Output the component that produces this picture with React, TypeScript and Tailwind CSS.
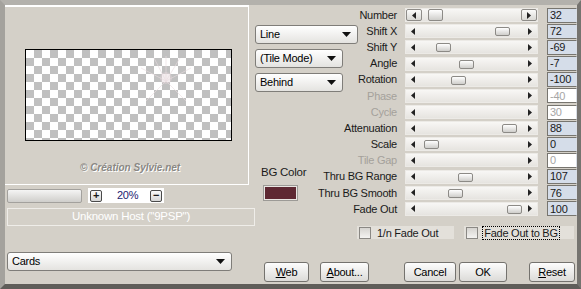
import React from "react";

type Row = { label: string; value: string; thumb: number | null; off?: boolean };

const rows: Row[] = [
  { label: "Number", value: "32", thumb: 22 },
  { label: "Shift X", value: "72", thumb: 89 },
  { label: "Shift Y", value: "-69", thumb: 30 },
  { label: "Angle", value: "-7", thumb: 53 },
  { label: "Rotation", value: "-100", thumb: 45 },
  { label: "Phase", value: "-40", thumb: null, off: true },
  { label: "Cycle", value: "30", thumb: null, off: true },
  { label: "Attenuation", value: "88", thumb: 96 },
  { label: "Scale", value: "0", thumb: 18 },
  { label: "Tile Gap", value: "0", thumb: null, off: true },
  { label: "Thru BG Range", value: "107", thumb: 52 },
  { label: "Thru BG Smooth", value: "76", thumb: 42 },
  { label: "Fade Out", value: "100", thumb: 101 },
];

const Arrow = ({ dir }: { dir: "l" | "r" }) => (
  <svg width="4" height="7" viewBox="0 0 4 7" className="shrink-0">
    {dir === "l" ? <path d="M4 0 L0 3.5 L4 7 Z" fill="#222" /> : <path d="M0 0 L4 3.5 L0 7 Z" fill="#222" />}
  </svg>
);

const Caret = () => (
  <svg width="9" height="5" viewBox="0 0 9 5" className="shrink-0">
    <path d="M0 0 H9 L4.5 5 Z" fill="#111" />
  </svg>
);

const Slider = ({ row, first }: { row: Row; first: boolean }) => (
  <div className="relative w-[133px] h-[14px] flex items-center justify-between px-[5px] bg-gradient-to-b from-[#f8f7f5] to-[#e6e4e0] border border-[#eceae6]">
    {first ? (
      <>
        <div className="absolute left-0 top-0 w-[16px] h-[12px] flex items-center justify-center rounded-[2px] border border-[#8e8c88] bg-gradient-to-b from-[#fbfbfa] to-[#d9d8d4]">
          <Arrow dir="l" />
        </div>
        <div className="absolute right-0 top-0 w-[16px] h-[12px] flex items-center justify-center rounded-[2px] border border-[#8e8c88] bg-gradient-to-b from-[#fbfbfa] to-[#d9d8d4]">
          <Arrow dir="r" />
        </div>
      </>
    ) : (
      <>
        <Arrow dir="l" />
        <Arrow dir="r" />
      </>
    )}
    {row.thumb !== null && (
      <div
        className={`absolute rounded-[2px] border border-[#8c8a86] bg-gradient-to-b from-[#ffffff] to-[#cfcecb] ${first ? "top-[0px] w-[15px] h-[12px]" : "top-[2px] w-[15px] h-[9px]"}`}
        style={{ left: row.thumb }}
      />
    )}
  </div>
);

const Select = ({ text, w }: { text: string; w: string }) => (
  <div className={`${w} h-[19px] flex items-center justify-between pl-[4px] pr-[6px] rounded-[3px] border border-[#7f7d79] bg-gradient-to-b from-[#ffffff] to-[#e4e3e0] text-[11px] text-black`}>
    <span>{text}</span>
    <Caret />
  </div>
);

const Button = ({ children, w }: { children: React.ReactNode; w: string }) => (
  <div className={`${w} h-[20px] flex items-center justify-center rounded-[3px] border border-[#74726e] bg-gradient-to-b from-[#fdfdfd] to-[#dcdbd8] text-[11px] text-black`}>
    {children}
  </div>
);

const Check = ({ label, focus }: { label: string; focus?: boolean }) => (
  <div className="h-[13px] flex items-center bg-[#e3e0da] pl-[2px] pr-[14px]">
    <div className="w-[12px] h-[12px] border border-[#8a8884] bg-gradient-to-b from-[#d6d4d0] to-[#f4f3f1]" />
    <span className={`ml-[4px] px-[1px] leading-[12px] ${focus ? "border border-dotted border-black" : "border border-transparent"}`}>{label}</span>
  </div>
);

export default function App() {
  return (
    <div className="w-[581px] h-[289px] overflow-hidden bg-[#d4d0c8] border-l-[5px] border-l-[#a4a29d] border-t-[5px] border-t-[#b3b1ac] border-r-[4px] border-r-[#75736f] border-b-[5px] border-b-[#5f5d59] font-['Liberation_Sans',Arial,sans-serif] text-[11px] tracking-[-0.25px] text-[#1a1a1a] flex">
      {/* left column */}
      <div className="w-[250px] shrink-0 flex flex-col">
        <div className="w-[244px] h-[180px] border-t-2 border-r border-b border-white flex flex-col">
          <div className="relative mt-[42px] ml-[20px] w-[207px] h-[92px] border border-black bg-white bg-[conic-gradient(#c0c0c0_25%,#ffffff_0_50%,#c0c0c0_0_75%,#ffffff_0)] bg-[length:16px_16px]">
            <svg className="absolute left-[110px] top-[6px]" width="60" height="50" viewBox="0 0 60 50">
              <g stroke="#eadde1" strokeWidth="1" opacity="0.6">
                <path d="M30 25 L30 0 M30 25 L55 12 M30 25 L50 45 M30 25 L10 45 M30 25 L5 12 M30 25 L18 2 M30 25 L44 2" />
              </g>
              <circle cx="30" cy="22" r="6" fill="#e6d8dc" opacity="0.45" />
            </svg>
          </div>
          <div className="mt-[19px] ml-[75px] text-[10px] font-bold italic text-[#8a8884] [text-shadow:1px_1px_0_#ffffff] tracking-normal">
            © Création Sylvie.net
          </div>
        </div>
        <div className="mt-[3px] h-[15px] flex items-center">
          <div className="ml-[2px] w-[75px] h-[14px] rounded-[2px] border border-[#a3a19d] bg-gradient-to-b from-[#f5f5f4] to-[#cfcecb]" />
          <div className="ml-[6px] w-[76px] h-[15px] bg-white flex items-center px-[2px]">
            <div className="w-[12px] h-[12px] rounded-[2px] border border-[#4a4a4a] bg-gradient-to-b from-[#fafafa] to-[#d6d6d6] flex items-center justify-center text-[11px] font-bold leading-none">+</div>
            <span className="ml-[15px] text-[11px] text-[#1c1c70]">20%</span>
            <div className="ml-auto w-[12px] h-[12px] rounded-[2px] border border-[#4a4a4a] bg-gradient-to-b from-[#fafafa] to-[#d6d6d6] flex items-center justify-center text-[11px] font-bold leading-none">−</div>
          </div>
        </div>
        <div className="mt-[5px] ml-[2px] w-[248px] h-[18px] shrink-0 border border-[#efede9] flex items-center justify-center text-[11.5px] text-white">
          Unknown Host ("9PSP")
        </div>
        <div className="mt-[26px] ml-[2px]">
          <Select text="Cards" w="w-[225px]" />
        </div>
      </div>

      {/* right side */}
      <div className="flex-1 flex flex-col">
        <div className="flex pt-[2px]">
          <div className="w-[55px] shrink-0 flex flex-col">
            <div className="mt-[18px]"><Select text="Line" w="w-[103px]" /></div>
            <div className="mt-[5px]"><Select text="(Tile Mode)" w="w-[88px]" /></div>
            <div className="mt-[5px]"><Select text="Behind" w="w-[88px]" /></div>
            <div className="mt-[72px] ml-[6px] whitespace-nowrap text-[11.5px]">BG Color</div>
            <div className="mt-[4px] ml-[8px] w-[35px] h-[16px] border border-[#9c9a96] p-[1px] bg-[#e8e6e2]">
              <div className="w-full h-full bg-[#5e2832]" />
            </div>
          </div>
          <div className="flex flex-col">
            {rows.map((r, i) => (
              <div key={r.label} className="h-[16.17px] flex items-center">
                <div className={`w-[87px] text-right whitespace-nowrap ${r.off ? "text-[#a4a19b]" : ""}`}>{r.label}</div>
                <div className="ml-[8px]"><Slider row={r} first={i === 0} /></div>
                <div
                  className={`ml-[9px] w-[30px] h-[15px] flex items-center pl-[2px] border border-[#77756f] border-r-[#d8dde5] ${
                    r.off ? "bg-white text-[#a6a6a6]" : "bg-[#d5dde9]"
                  }`}
                >
                  {r.value}
                </div>
              </div>
            ))}
          </div>
        </div>

        <div className="mt-[9px] flex items-center">
          <div className="ml-[102px]"><Check label="1/n Fade Out" /></div>
          <div className="ml-[10px]"><Check label="Fade Out to BG" focus /></div>
        </div>

        <div className="mt-[23px] flex items-center">
          <div className="ml-[9px]"><Button w="w-[45px]"><span><u>W</u>eb</span></Button></div>
          <div className="ml-[11px]"><Button w="w-[49px]"><span><u>A</u>bout...</span></Button></div>
          <div className="ml-[35px]"><Button w="w-[52px]">Cancel</Button></div>
          <div className="ml-[3px]"><Button w="w-[48px]">OK</Button></div>
          <div className="ml-[22px]"><Button w="w-[46px]"><span><u>R</u>eset</span></Button></div>
        </div>
      </div>
    </div>
  );
}
